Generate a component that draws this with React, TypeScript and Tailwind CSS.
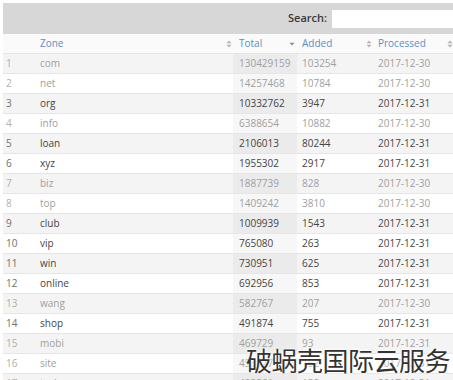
import React from "react";

type Row = [string, string, string, string, string, boolean];

const rows: Row[] = [
  ["1", "com", "130429159", "103254", "2017-12-30", false],
  ["2", "net", "14257468", "10784", "2017-12-30", false],
  ["3", "org", "10332762", "3947", "2017-12-31", true],
  ["4", "info", "6388654", "10882", "2017-12-30", false],
  ["5", "loan", "2106013", "80244", "2017-12-31", true],
  ["6", "xyz", "1955302", "2917", "2017-12-31", true],
  ["7", "biz", "1887739", "828", "2017-12-30", false],
  ["8", "top", "1409242", "3810", "2017-12-30", false],
  ["9", "club", "1009939", "1543", "2017-12-31", true],
  ["10", "vip", "765080", "263", "2017-12-31", true],
  ["11", "win", "730951", "625", "2017-12-31", true],
  ["12", "online", "692956", "853", "2017-12-31", true],
  ["13", "wang", "582767", "207", "2017-12-30", false],
  ["14", "shop", "491874", "755", "2017-12-31", true],
  ["15", "mobi", "469729", "93", "2017-12-31", false],
  ["16", "site", "453127", "152", "2017-12-31", false],
  ["17", "tech", "423561", "158", "2017-12-31", false],
];

function SortBoth() {
  return (
    <svg width="6" height="8" viewBox="0 0 6 8" className="shrink-0">
      <path d="M3 0.5 L5.5 3.2 H0.5 Z" fill="#b5b5b5" />
      <path d="M3 7.5 L5.5 4.8 H0.5 Z" fill="#b5b5b5" />
    </svg>
  );
}

function SortDesc() {
  return (
    <svg width="6" height="8" viewBox="0 0 6 8" className="shrink-0">
      <path d="M0.5 2.8 H5.5 L3 5.6 Z" fill="#8c8c8c" />
    </svg>
  );
}

const grid = "grid grid-cols-[30px_200px_64px_76px_83px]";

export default function App() {
  return (
    <div
      className="relative w-[453px] h-[380px] overflow-hidden bg-white pl-[3px] pt-[3px]"
      style={{ fontFamily: '"Open Sans", "Liberation Sans", sans-serif' }}
    >
      <div className="flex h-[31px] items-center justify-end bg-[#d7d7d7]">
        <span className="mr-[5px] text-[11px] font-semibold text-[#3a3a3a]">Search:</span>
        <div className="h-[18px] w-[121px] bg-white" />
      </div>

      <div className={`${grid} h-[20px] items-center bg-[#fafafa] text-[10px] text-[#5a8fc8] border-b border-[#e4e4e4]`}>
        <div />
        <div className="flex items-center justify-between pl-[7px] pr-[1px]">
          <span>Zone</span>
          <SortBoth />
        </div>
        <div className="flex items-center justify-between pl-[6px] pr-[2px]">
          <span>Total</span>
          <SortDesc />
        </div>
        <div className="flex items-center justify-between pl-[5px] pr-[1px]">
          <span>Added</span>
          <SortBoth />
        </div>
        <div className="flex items-center justify-between pl-[5px] pr-[3px]">
          <span>Processed</span>
          <SortBoth />
        </div>
      </div>

      {rows.map(([n, zone, total, added, proc, dark], i) => {
        const odd = i % 2 === 0;
        const txt = dark ? "text-[#454545]" : "text-[#a0a0a0]";
        const numTxt = dark ? "text-[#707070]" : "text-[#b0b0b0]";
        return (
          <div
            key={n}
            className={`${grid} h-[20px] items-stretch text-[10px] border-b border-[#e6e6e6] ${odd ? "bg-[#f4f4f4]" : "bg-white"}`}
          >
            <div className={`flex items-center pl-[3px] ${numTxt}`}>{n}</div>
            <div className={`flex items-center pl-[7px] ${txt}`}>{zone}</div>
            <div className={`flex items-center pl-[6px] ${txt} ${odd ? "bg-[#ebebeb]" : "bg-[#f7f7f7]"}`}>{total}</div>
            <div className={`flex items-center pl-[5px] ${txt}`}>{added}</div>
            <div className={`flex items-center pl-[5px] ${txt}`}>{proc}</div>
          </div>
        );
      })}

      <div
        className="absolute left-[246px] top-[343px] text-[26px] leading-[34px] text-[#333333] whitespace-nowrap tracking-[-0.5px]"
        style={{
          fontFamily: '"Noto Sans CJK SC", "Noto Sans", sans-serif',
          textShadow: "0 0 3px #fff, 0 0 3px #fff",
        }}
      >
        破蜗壳国际云服务
      </div>
    </div>
  );
}
